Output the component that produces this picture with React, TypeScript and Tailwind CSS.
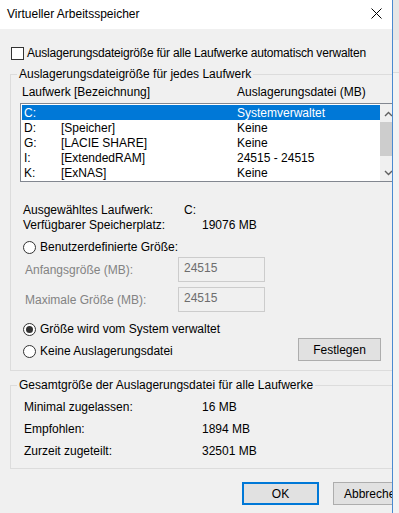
import React from "react";

function Radio({ checked }: { checked?: boolean }) {
  return (
    <span className="w-[13px] h-[13px] rounded-full border border-[#333333] bg-white flex items-center justify-center shrink-0">
      {checked ? <span className="w-[7px] h-[7px] rounded-full bg-[#333333]" /> : null}
    </span>
  );
}

function Chevron({ up }: { up?: boolean }) {
  return (
    <svg width="9" height="6" viewBox="0 0 9 6">
      <path
        d={up ? "M1 5 L4.5 1.5 L8 5" : "M1 1 L4.5 4.5 L8 1"}
        stroke="#606060"
        strokeWidth="1.4"
        fill="none"
      />
    </svg>
  );
}

const rows = [
  { d: "C:", l: "", v: "Systemverwaltet", sel: true },
  { d: "D:", l: "[Speicher]", v: "Keine" },
  { d: "G:", l: "[LACIE SHARE]", v: "Keine" },
  { d: "I:", l: "[ExtendedRAM]", v: "24515 - 24515" },
  { d: "K:", l: "[ExNAS]", v: "Keine" },
];

export default function App() {
  return (
    <div className="w-[399px] h-[513px] flex bg-[#f0f0f0] overflow-hidden font-['Liberation_Sans',Arial,sans-serif] text-[12px] leading-[16px] text-black">
      <div className="w-[393px] h-full shrink-0 flex flex-col overflow-hidden border-r border-[#4a8ad0] bg-[#f0f0f0]">
        {/* Title bar */}
        <div className="h-[29px] shrink-0 bg-white flex items-center justify-between pl-[7px] pr-[10px] pb-[2px]">
          <span>Virtueller Arbeitsspeicher</span>
          <svg width="11" height="11" viewBox="0 0 11 11">
            <path d="M0.5 0.5 L10.5 10.5 M10.5 0.5 L0.5 10.5" stroke="#000" strokeWidth="1" fill="none" />
          </svg>
        </div>

        <div className="flex flex-col pl-[10px]">
          {/* Auto checkbox */}
          <div className="mt-[16px] h-[16px] flex items-center pl-[1px]">
            <span className="w-[13px] h-[13px] border border-[#333333] bg-white shrink-0" />
            <span className="ml-[3px] whitespace-nowrap tracking-[-0.2px]">
              Auslagerungsdateigröße für alle Laufwerke automatisch verwalten
            </span>
          </div>

          {/* Group 1 */}
          <fieldset className="mt-[5px] w-[410px] shrink-0 border border-[#dcdcdc] p-0 pb-[9px]">
            <legend className="ml-[6px] px-[2px] leading-[16px] whitespace-nowrap">
              Auslagerungsdateigröße für jedes Laufwerk
            </legend>
            <div className="mt-[2px] h-[16px] flex whitespace-nowrap">
              <span className="ml-[11px] w-[215px]">Laufwerk [Bezeichnung]</span>
              <span>Auslagerungsdatei (MB)</span>
            </div>

            {/* List box */}
            <div className="mt-[3px] ml-[9px] w-[380px] h-[79px] border border-[#828790] bg-white flex">
              <div className="w-[359px] flex flex-col pl-[1px] pt-[1px]">
                {rows.map((r) => (
                  <div
                    key={r.d}
                    className={
                      "h-[15px] flex items-center px-[2px] whitespace-nowrap " +
                      (r.sel ? "bg-[#0078d7] text-white" : "")
                    }
                  >
                    <span className="w-[37px]">{r.d}</span>
                    <span className="w-[176px]">{r.l}</span>
                    <span>{r.v}</span>
                  </div>
                ))}
              </div>
              <div className="w-[17px] bg-[#f0f0f0] flex flex-col">
                <div className="h-[17px] flex items-center justify-center pt-[2px]">
                  <Chevron up />
                </div>
                <div className="mt-[1px] h-[34px] bg-[#cdcdcd]" />
                <div className="flex-1" />
                <div className="h-[17px] flex items-center justify-center">
                  <Chevron />
                </div>
              </div>
            </div>

            {/* Selected drive info */}
            <div className="mt-[20px] flex flex-col">
              <div className="h-[15px] flex items-center whitespace-nowrap">
                <span className="ml-[12px] w-[161px]">Ausgewähltes Laufwerk:</span>
                <span>C:</span>
              </div>
              <div className="h-[15px] flex items-center whitespace-nowrap">
                <span className="ml-[12px] w-[179px]">Verfügbarer Speicherplatz:</span>
                <span>19076 MB</span>
              </div>
            </div>

            {/* Custom size */}
            <div className="mt-[7px] h-[16px] flex items-center ml-[12px] whitespace-nowrap">
              <Radio />
              <span className="ml-[4px]">Benutzerdefinierte Größe:</span>
            </div>
            <div className="mt-[2px] h-[25px] flex items-center whitespace-nowrap">
              <span className="ml-[14px] w-[153px] text-[#838383]">Anfangsgröße (MB):</span>
              <div className="w-[87px] h-[25px] border border-[#cccccc] bg-[#f0f0f0] pl-[5px] pt-[2px] text-[#6d6d6d]">
                24515
              </div>
            </div>
            <div className="mt-[5px] h-[25px] flex items-center whitespace-nowrap">
              <span className="ml-[14px] w-[153px] text-[#838383]">Maximale Größe (MB):</span>
              <div className="w-[87px] h-[25px] border border-[#cccccc] bg-[#f0f0f0] pl-[5px] pt-[2px] text-[#6d6d6d]">
                24515
              </div>
            </div>

            {/* System managed */}
            <div className="mt-[9px] h-[16px] flex items-center ml-[12px] whitespace-nowrap">
              <Radio checked />
              <span className="ml-[4px]">Größe wird vom System verwaltet</span>
            </div>
            <div className="mt-[1px] h-[23px] flex items-center whitespace-nowrap">
              <div className="ml-[12px] w-[275px] flex items-center pt-[3px]">
                <Radio />
                <span className="ml-[4px]">Keine Auslagerungsdatei</span>
              </div>
              <div className="w-[83px] h-[23px] border border-[#adadad] bg-[#e1e1e1] flex items-center justify-center">
                Festlegen
              </div>
            </div>
          </fieldset>

          {/* Group 2 */}
          <fieldset className="mt-[6px] w-[410px] shrink-0 border border-[#dcdcdc] p-0 pb-[6px]">
            <legend className="ml-[6px] px-[2px] leading-[16px] whitespace-nowrap">
              Gesamtgröße der Auslagerungsdatei für alle Laufwerke
            </legend>
            <div className="pt-[3px] flex flex-col">
              <div className="h-[22px] flex items-center whitespace-nowrap">
                <span className="ml-[13px] w-[178px]">Minimal zugelassen:</span>
                <span>16 MB</span>
              </div>
              <div className="h-[22px] flex items-center whitespace-nowrap">
                <span className="ml-[13px] w-[178px]">Empfohlen:</span>
                <span>1894 MB</span>
              </div>
              <div className="h-[22px] flex items-center whitespace-nowrap">
                <span className="ml-[13px] w-[178px]">Zurzeit zugeteilt:</span>
                <span>32501 MB</span>
              </div>
            </div>
          </fieldset>

          {/* Buttons */}
          <div className="mt-[13px] w-[420px] flex whitespace-nowrap">
            <div className="ml-[232px] w-[77px] h-[23px] shrink-0 border-2 border-[#0078d7] bg-[#e1e1e1] flex items-center justify-center">
              OK
            </div>
            <div className="ml-[14px] w-[77px] h-[23px] shrink-0 border border-[#adadad] bg-[#e1e1e1] flex items-center justify-start pl-[10px]">
              Abbrechen
            </div>
          </div>
        </div>
      </div>
      <div className="flex-1 flex flex-col">
        <div className="h-[40px] bg-[#e6e6e6]" />
        <div className="h-[33px] bg-[#f0f0f0] border-b border-[#dcdcdc]" />
        <div className="flex-1 bg-[#f3f3f3]" />
      </div>
    </div>
  );
}
